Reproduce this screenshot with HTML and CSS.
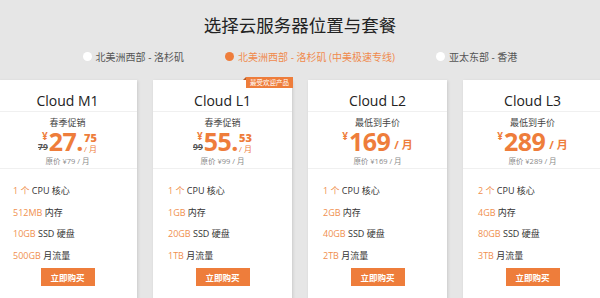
FILE: index.html
```html
<!DOCTYPE html>
<html lang="zh-CN">
<head>
    <meta charset="UTF-8">
    <meta name="viewport" content="width=device-width, initial-scale=1.0">
    <title>选择云服务器位置与套餐</title>
    <link rel="stylesheet" href="styles.css">
</head>
<body>
    <h1>选择云服务器位置与套餐</h1>

    <div class="regions">
        <label class="region"><span class="dot"></span>北美洲西部 - 洛杉矶</label>
        <label class="region active"><span class="dot"></span>北美洲西部 - 洛杉矶 (中美极速专线)</label>
        <label class="region"><span class="dot"></span>亚太东部 - 香港</label>
    </div>

    <div class="plans">
        <div class="plan">
            <div class="plan-name">Cloud M1</div>
            <div class="plan-price">
                <div class="label">春季促销</div>
                <div class="price">
                    <span class="pre"><span class="yen">¥</span><s class="old">79</s></span><span class="num">27.</span><span class="cents"><b>75</b><i>/ 月</i></span>
                </div>
                <div class="orig">原价 ¥79 / 月</div>
            </div>
            <ul class="features">
                <li><em>1 个</em> CPU 核心</li>
                <li><em>512MB</em> 内存</li>
                <li><em>10GB</em> SSD 硬盘</li>
                <li><em>500GB</em> 月流量</li>
            </ul>
            <button class="buy">立即购买</button>
        </div>

        <div class="plan">
            <div class="badge">最受欢迎产品</div>
            <div class="plan-name">Cloud L1</div>
            <div class="plan-price">
                <div class="label">春季促销</div>
                <div class="price">
                    <span class="pre"><span class="yen">¥</span><s class="old">99</s></span><span class="num">55.</span><span class="cents"><b>53</b><i>/ 月</i></span>
                </div>
                <div class="orig">原价 ¥99 / 月</div>
            </div>
            <ul class="features">
                <li><em>1 个</em> CPU 核心</li>
                <li><em>1GB</em> 内存</li>
                <li><em>20GB</em> SSD 硬盘</li>
                <li><em>1TB</em> 月流量</li>
            </ul>
            <button class="buy">立即购买</button>
        </div>

        <div class="plan">
            <div class="plan-name">Cloud L2</div>
            <div class="plan-price">
                <div class="label">最低到手价</div>
                <div class="price">
                    <span class="pre"><span class="yen">¥</span></span><span class="num">169</span><span class="unit">/ 月</span>
                </div>
                <div class="orig">原价 ¥169 / 月</div>
            </div>
            <ul class="features">
                <li><em>1 个</em> CPU 核心</li>
                <li><em>2GB</em> 内存</li>
                <li><em>40GB</em> SSD 硬盘</li>
                <li><em>2TB</em> 月流量</li>
            </ul>
            <button class="buy">立即购买</button>
        </div>

        <div class="plan">
            <div class="plan-name">Cloud L3</div>
            <div class="plan-price">
                <div class="label">最低到手价</div>
                <div class="price">
                    <span class="pre"><span class="yen">¥</span></span><span class="num">289</span><span class="unit">/ 月</span>
                </div>
                <div class="orig">原价 ¥289 / 月</div>
            </div>
            <ul class="features">
                <li><em>2 个</em> CPU 核心</li>
                <li><em>4GB</em> 内存</li>
                <li><em>80GB</em> SSD 硬盘</li>
                <li><em>3TB</em> 月流量</li>
            </ul>
            <button class="buy">立即购买</button>
        </div>
    </div>
</body>
</html>
```

FILE: styles.css
```css
html, body {
    overflow: hidden;
}
body {
    margin: 0;
    background-color: #e6e6e6;
    font-family: "Open Sans", "Noto Sans CJK SC", sans-serif;
    color: #333;
}
h1 {
    margin: 0;
    padding-top: 13px;
    font-size: 17.5px;
    font-weight: normal;
    line-height: 24px;
    text-align: center;
    color: #222;
}
.regions {
    display: flex;
    justify-content: center;
    gap: 41px;
    margin-top: 12px;
    height: 14px;
    align-items: center;
}
.region {
    display: flex;
    align-items: center;
    gap: 4px;
    font-size: 10px;
    color: #555;
    white-space: nowrap;
}
.region .dot {
    width: 9px;
    height: 9px;
    border-radius: 50%;
    background-color: #fff;
}
.region.active {
    color: #f08a4d;
}
.region.active .dot {
    background-color: #ee7d3b;
}
.plans {
    display: flex;
    justify-content: center;
    gap: 16px;
    margin-top: 17px;
}
.plan {
    position: relative;
    flex: 0 0 139px;
    height: 240px;
    background-color: #fff;
    box-shadow: 1px 1px 3px rgba(0, 0, 0, 0.12);
}
.badge {
    position: absolute;
    top: -3px;
    right: -1px;
    width: 47px;
    height: 11px;
    background-color: #ee7d3b;
    color: #fff;
    font-size: 6.5px;
    line-height: 11px;
    text-align: center;
}
.badge::before {
    content: "";
    position: absolute;
    left: -3px;
    top: 0;
    border-bottom: 3px solid #b85b22;
    border-left: 3px solid transparent;
}
.plan-name {
    padding-top: 11px;
    font-size: 14px;
    line-height: 20px;
    text-align: center;
    color: #222;
    border-bottom: 1px solid #f0f0f0;
}
.plan-price {
    height: 57px;
    padding-top: 4px;
    box-sizing: border-box;
    text-align: center;
    border-bottom: 1px solid #f0f0f0;
}
.label {
    font-size: 9px;
    line-height: 13px;
    color: #444;
}
.price {
    display: flex;
    justify-content: center;
    align-items: flex-start;
    height: 24px;
    color: #ee7d3b;
    font-weight: bold;
}
.price .pre {
    display: flex;
    flex-direction: column;
    align-items: flex-end;
    height: 22px;
    margin-right: 1px;
}
.price .yen {
    font-size: 10px;
    line-height: 12px;
    margin-top: 1px;
}
.price .old {
    margin-top: auto;
    font-size: 8.5px;
    line-height: 9px;
    color: #555;
}
.price .num {
    font-size: 25px;
    line-height: 24px;
    letter-spacing: -0.5px;
}
.price .cents {
    display: flex;
    flex-direction: column;
    margin-left: 1px;
}
.price .cents b {
    font-size: 11px;
    line-height: 11px;
    margin-top: 3px;
}
.price .cents i {
    font-style: normal;
    font-weight: normal;
    font-size: 8px;
    line-height: 11px;
}
.price .unit {
    font-size: 11px;
    line-height: 12px;
    margin: 10px 0 0 4px;
}
.orig {
    margin-top: 3px;
    font-size: 7.5px;
    line-height: 10px;
    color: #888;
}
.features {
    list-style: none;
    margin: 0;
    padding: 11px 15px 0;
}
.features li {
    font-size: 9px;
    line-height: 21.5px;
    color: #333;
}
.features em {
    font-style: normal;
    color: #f0904f;
}
.buy {
    display: block;
    width: 54px;
    height: 18px;
    margin: 2px auto 0;
    padding: 0;
    border: none;
    background-color: #ee7d3b;
    color: #fff;
    font-family: inherit;
    font-size: 8.5px;
    font-weight: bold;
    cursor: pointer;
}
```
